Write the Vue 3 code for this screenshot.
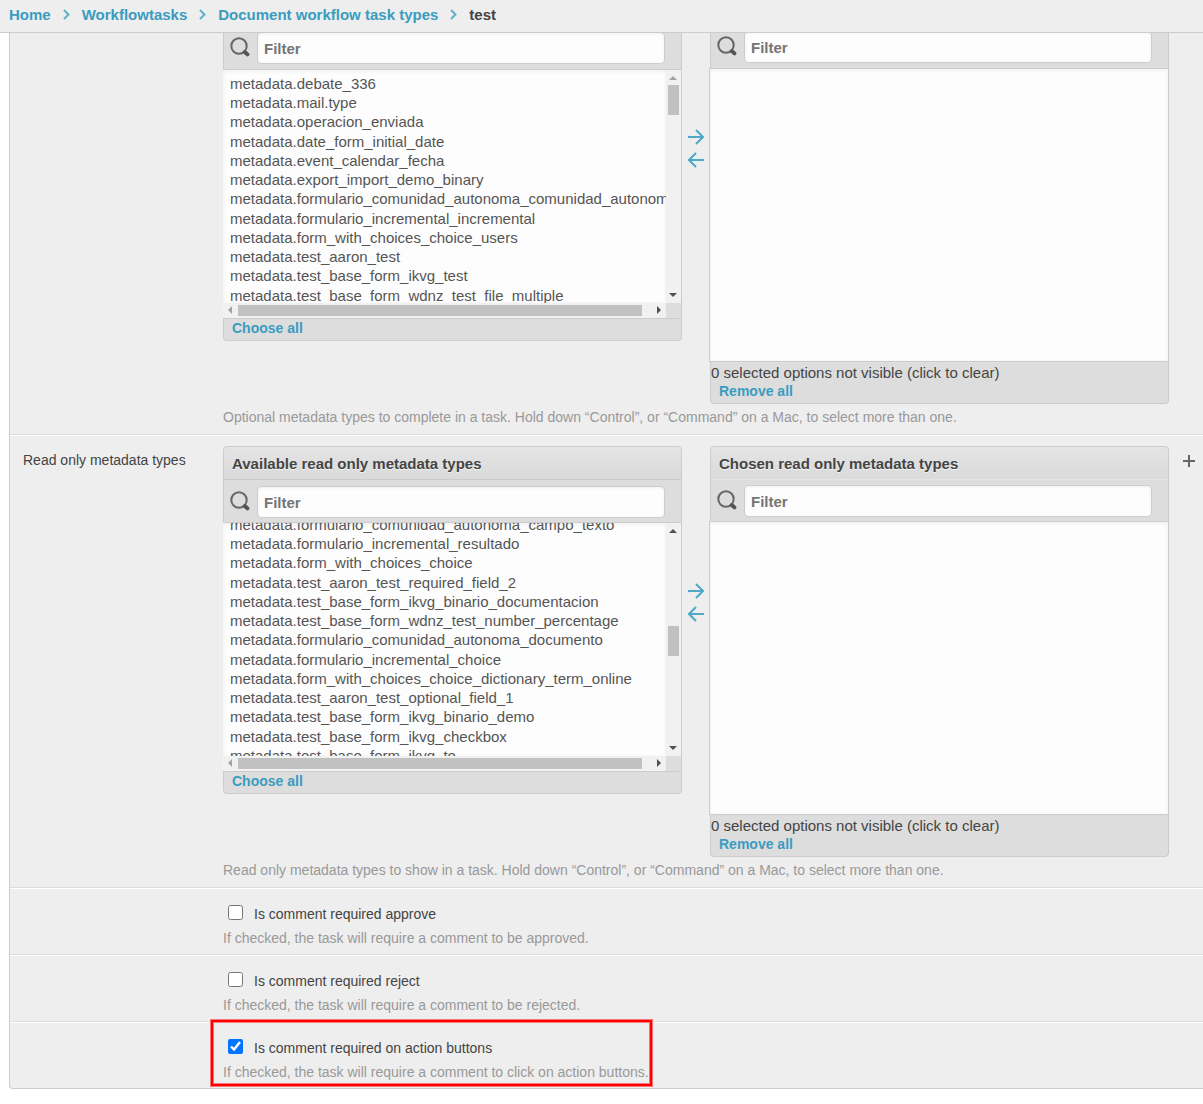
<script setup>
import { onMounted, ref } from 'vue'

const crumbs = ['Home', 'Workflowtasks', 'Document workflow task types']

const selectors = [
  {
    id: 'optional',
    label: '',
    available: '',
    chosen: '',
    scroll: 0,
    thumb: 15,
    atTop: true,
    help: 'Optional metadata types to complete in a task. Hold down “Control”, or “Command” on a Mac, to select more than one.',
    options: [
      'metadata.debate_336',
      'metadata.mail.type',
      'metadata.operacion_enviada',
      'metadata.date_form_initial_date',
      'metadata.event_calendar_fecha',
      'metadata.export_import_demo_binary',
      'metadata.formulario_comunidad_autonoma_comunidad_autonoma',
      'metadata.formulario_incremental_incremental',
      'metadata.form_with_choices_choice_users',
      'metadata.test_aaron_test',
      'metadata.test_base_form_ikvg_test',
      'metadata.test_base_form_wdnz_test_file_multiple',
    ],
  },
  {
    id: 'readonly',
    label: 'Read only metadata types',
    available: 'Available read only metadata types',
    chosen: 'Chosen read only metadata types',
    scroll: 12,
    thumb: 103,
    atTop: false,
    help: 'Read only metadata types to show in a task. Hold down “Control”, or “Command” on a Mac, to select more than one.',
    options: [
      'metadata.formulario_comunidad_autonoma_campo_texto',
      'metadata.formulario_incremental_resultado',
      'metadata.form_with_choices_choice',
      'metadata.test_aaron_test_required_field_2',
      'metadata.test_base_form_ikvg_binario_documentacion',
      'metadata.test_base_form_wdnz_test_number_percentage',
      'metadata.formulario_comunidad_autonoma_documento',
      'metadata.formulario_incremental_choice',
      'metadata.form_with_choices_choice_dictionary_term_online',
      'metadata.test_aaron_test_optional_field_1',
      'metadata.test_base_form_ikvg_binario_demo',
      'metadata.test_base_form_ikvg_checkbox',
      'metadata.test_base_form_ikvg_to',
    ],
  },
]

const checks = ref([
  { id: 'approve', label: 'Is comment required approve', help: 'If checked, the task will require a comment to be approved.', value: false },
  { id: 'reject', label: 'Is comment required reject', help: 'If checked, the task will require a comment to be rejected.', value: false },
  { id: 'buttons', label: 'Is comment required on action buttons', help: 'If checked, the task will require a comment to click on action buttons.', value: true, marked: true },
])

const lists = ref([])
onMounted(() => {
  lists.value.forEach((list, i) => {
    list.scrollTop = selectors[i].scroll
  })
})
</script>

<template>
  <div class="page">
    <nav class="crumbs" aria-label="Breadcrumbs">
      <template v-for="crumb in crumbs" :key="crumb">
        <a href="#">{{ crumb }}</a>
        <svg class="chevron" viewBox="0 0 7 11" aria-hidden="true"><path d="M1 1l4.5 4.5L1 10" /></svg>
      </template>
      <span>test</span>
    </nav>

    <main class="module">
      <section v-for="s in selectors" :key="s.id" class="row">
        <label class="name" :for="s.id + '-from'">{{ s.label }}</label>
        <div class="field">
          <div class="selector">
            <div class="box available">
              <h2 v-if="s.available">{{ s.available }}</h2>
              <div class="filter">
                <svg class="lens" viewBox="0 0 20 20" aria-hidden="true">
                  <circle cx="9" cy="9" r="7.7" /><path class="handle" d="M14.8 15l2.600 2.400" />
                </svg>
                <input type="text" placeholder="Filter" aria-label="Filter available">
              </div>
              <div class="list">
                <select :id="s.id + '-from'" ref="lists" multiple>
                  <option v-for="o in s.options" :key="o">{{ o }}</option>
                </select>
                <div class="vbar" aria-hidden="true">
                  <i class="tri up" :class="{ off: s.atTop }"></i>
                  <i class="thumb" :style="{ top: s.thumb + 'px' }"></i>
                  <i class="tri down"></i>
                </div>
                <div class="hbar" aria-hidden="true">
                  <i class="tri left off"></i>
                  <i class="thumb"></i>
                  <i class="tri right"></i>
                </div>
              </div>
              <div class="foot"><a href="#">Choose all</a></div>
            </div>

            <div class="arrows">
              <button type="button" aria-label="Choose">
                <svg viewBox="0 0 16 16"><path d="M0 8h15M8 1l7 7-7 7" /></svg>
              </button>
              <button type="button" aria-label="Remove">
                <svg viewBox="0 0 16 16"><path d="M16 8H1M8 1L1 8l7 7" /></svg>
              </button>
            </div>

            <div class="box chosen">
              <h2 v-if="s.chosen">{{ s.chosen }}</h2>
              <div class="filter">
                <svg class="lens" viewBox="0 0 20 20" aria-hidden="true">
                  <circle cx="9" cy="9" r="7.7" /><path class="handle" d="M14.8 15l2.600 2.400" />
                </svg>
                <input type="text" placeholder="Filter" aria-label="Filter chosen">
              </div>
              <select class="target" multiple aria-label="Chosen types"></select>
              <div class="foot">
                <p>0 selected options not visible (click to clear)</p>
                <a href="#">Remove all</a>
              </div>
            </div>

            <div class="side">
              <button v-if="s.label" type="button" aria-label="Add another">
                <svg viewBox="0 0 12 12"><path d="M6 0v12M0 6h12" /></svg>
              </button>
            </div>
          </div>
          <p class="help">{{ s.help }}</p>
        </div>
      </section>

      <section v-for="c in checks" :key="c.id" class="row check">
        <div class="name"></div>
        <div class="field">
          <div class="tick">
            <input :id="c.id" v-model="c.value" type="checkbox">
            <label :for="c.id">{{ c.label }}</label>
          </div>
          <p class="help">{{ c.help }}</p>
          <div v-if="c.marked" class="mark"></div>
        </div>
      </section>
    </main>
  </div>
</template>

<style>
body {
  margin: 0;
  background: #fff;
}
</style>

<style scoped>
.page {
  font: 14px/17px "Liberation Sans", Arial, sans-serif;
  color: #444;
  overflow: hidden;
  padding-bottom: 15px;
}
a {
  color: #3a9cbf;
  font-weight: bold;
  text-decoration: none;
}
p,
h2 {
  margin: 0;
}
button {
  display: block;
  padding: 0;
  border: 0;
  background: none;
}
svg {
  display: block;
  fill: none;
}
.crumbs {
  position: relative;
  z-index: 2;
  display: flex;
  align-items: center;
  gap: 12px;
  box-sizing: border-box;
  height: 33px;
  padding: 0 9px 3px;
  background: #eee;
  border-bottom: 1px solid #ccc;
  font-size: 15px;
  font-weight: bold;
}
.chevron {
  width: 7px;
  height: 11px;
  stroke: #5fb0cb;
  stroke-width: 2;
}
/* The form is scrolled slightly under the breadcrumb bar. */
.module {
  margin: -6px 0 0 9px;
  background: #eee;
  border: 1px solid #ccc;
  border-width: 0 0 1px 1px;
  border-bottom-left-radius: 4px;
}
.row {
  display: flex;
  padding: 10px 0 8px 13px;
  border-top: 1px solid #fff;
  border-bottom: 1px solid #ddd;
}
.row:first-child {
  padding-top: 0;
  border-top: 0;
}
.row:last-child {
  border-bottom: 0;
}
.name {
  flex: none;
  width: 200px;
  padding-top: 6px;
  box-sizing: border-box;
}
.field {
  position: relative;
  flex: 1;
  min-width: 0;
}
.selector {
  display: flex;
  align-items: flex-start;
}
.box {
  flex: 1;
  min-width: 0;
  background: #ddd;
  border: 1px solid #ccc;
  border-radius: 4px;
}
.row:first-child .box {
  border-top: 0;
}
h2 {
  padding: 0 8px;
  height: 32px;
  border-bottom: 1px solid #ccc;
  border-radius: 4px 4px 0 0;
  background: linear-gradient(#e4e4e4, #dadada);
  font-size: 15px;
  line-height: 34px;
  text-shadow: 0 1px 0 #f4f4f4;
}
.chosen h2 {
  border-bottom-color: #e5e5e5;
}
.filter {
  display: flex;
  align-items: flex-start;
  gap: 7px;
  box-sizing: border-box;
  height: 41px;
  padding: 5px 16px 0 6px;
}
.available .filter {
  height: 42px;
  padding-top: 6px;
}
.row:first-child .available .filter {
  padding-top: 5px;
}
.row:first-child .chosen .filter {
  padding-top: 4px;
}
.lens {
  flex: none;
  width: 20px;
  height: 20px;
  margin-top: 5px;
  stroke: #666;
  stroke-width: 2;
}
.handle {
  stroke: #555;
  stroke-width: 4;
  stroke-linecap: round;
}
.filter input {
  flex: 1;
  min-width: 0;
  box-sizing: border-box;
  height: 32px;
  margin: 0;
  padding: 0 6px;
  border: 1px solid #ccc;
  border-radius: 4px;
  background: #fdfdfd;
  box-shadow: inset 0 1px 3px #eee;
  font: bold 15px "Liberation Sans", Arial, sans-serif;
  color: #444;
}
.filter input::placeholder {
  color: #757575;
}
.list {
  display: grid;
  grid-template: 233px 15px / minmax(0, 1fr) 15px;
  margin-left: -1px;
  border-top: 1px solid #ccc;
  border-bottom: 1px solid #ccc;
}
select {
  display: block;
  appearance: none;
  box-sizing: border-box;
  width: 100%;
  height: 100%;
  margin: 0;
  padding: 5px 5px 0;
  overflow: hidden;
  border: 0;
  border-radius: 0;
  outline: 0;
  background: #fdfdfd;
  box-shadow: inset 0 1px 4px #eee;
  font: 15px "Liberation Sans", Arial, sans-serif;
  color: #555;
}
option {
  box-sizing: border-box;
  height: 19px;
  min-height: 0;
  padding: 0 2px;
  line-height: 19px;
}
option:nth-child(4n + 3) {
  height: 20px;
}
.target {
  width: calc(100% + 2px);
  height: 294px;
  margin-left: -2px;
  border: 1px solid #ccc;
  border-right: 0;
}
.vbar,
.hbar {
  position: relative;
  background: #f1f1f1;
}
.thumb {
  position: absolute;
  background: #c1c1c1;
}
.vbar .thumb {
  left: 2px;
  width: 11px;
  height: 30px;
}
.hbar .thumb {
  top: 2px;
  left: 15px;
  right: 24px;
  height: 11px;
}
.tri {
  position: absolute;
  border: 4px solid transparent;
}
.up {
  top: 2px;
  left: 3px;
  border-bottom-color: #505050;
}
.down {
  bottom: 2px;
  left: 3px;
  border-top-color: #505050;
}
.left {
  top: 3px;
  left: 1px;
  border-right-color: #505050;
}
.right {
  top: 3px;
  right: 1px;
  border-left-color: #505050;
}
.up.off {
  border-bottom-color: #a3a3a3;
}
.left.off {
  border-right-color: #a3a3a3;
}
.foot a {
  display: block;
  padding: 1px 8px 3px;
}
.foot p {
  padding-top: 1px;
  font-size: 15px;
  line-height: 19px;
}
.arrows {
  flex: none;
  display: flex;
  flex-direction: column;
  gap: 7px;
  width: 28px;
  padding: 137px 0 0 6px;
  box-sizing: border-box;
}
.row:first-child .arrows {
  padding-top: 102px;
}
.arrows svg {
  width: 16px;
  height: 16px;
  stroke: #4ea9c6;
  stroke-width: 2;
}
.side {
  flex: none;
  width: 34px;
  padding: 9px 0 0 14px;
  box-sizing: border-box;
}
.side svg {
  width: 12px;
  height: 12px;
  stroke: #666;
  stroke-width: 2;
}
.help {
  margin-top: 5px;
  color: #999;
}
.check {
  padding-top: 16px;
  padding-bottom: 7px;
}
.tick {
  display: flex;
  align-items: flex-start;
  gap: 11px;
  padding-left: 5px;
}
.tick input {
  width: 15px;
  height: 15px;
  margin: 0;
}
.tick label {
  padding-top: 1px;
}
.check .help {
  margin-top: 7px;
}
/* Highlight frame drawn over the row's edges. */
.mark {
  position: absolute;
  top: -19px;
  left: -12px;
  width: 441px;
  height: 66px;
  box-sizing: border-box;
  border: 2px solid #f00;
  box-shadow: 0 0 0 1px #ff000080, inset 0 0 0 1px #ff000080;
}
</style>
